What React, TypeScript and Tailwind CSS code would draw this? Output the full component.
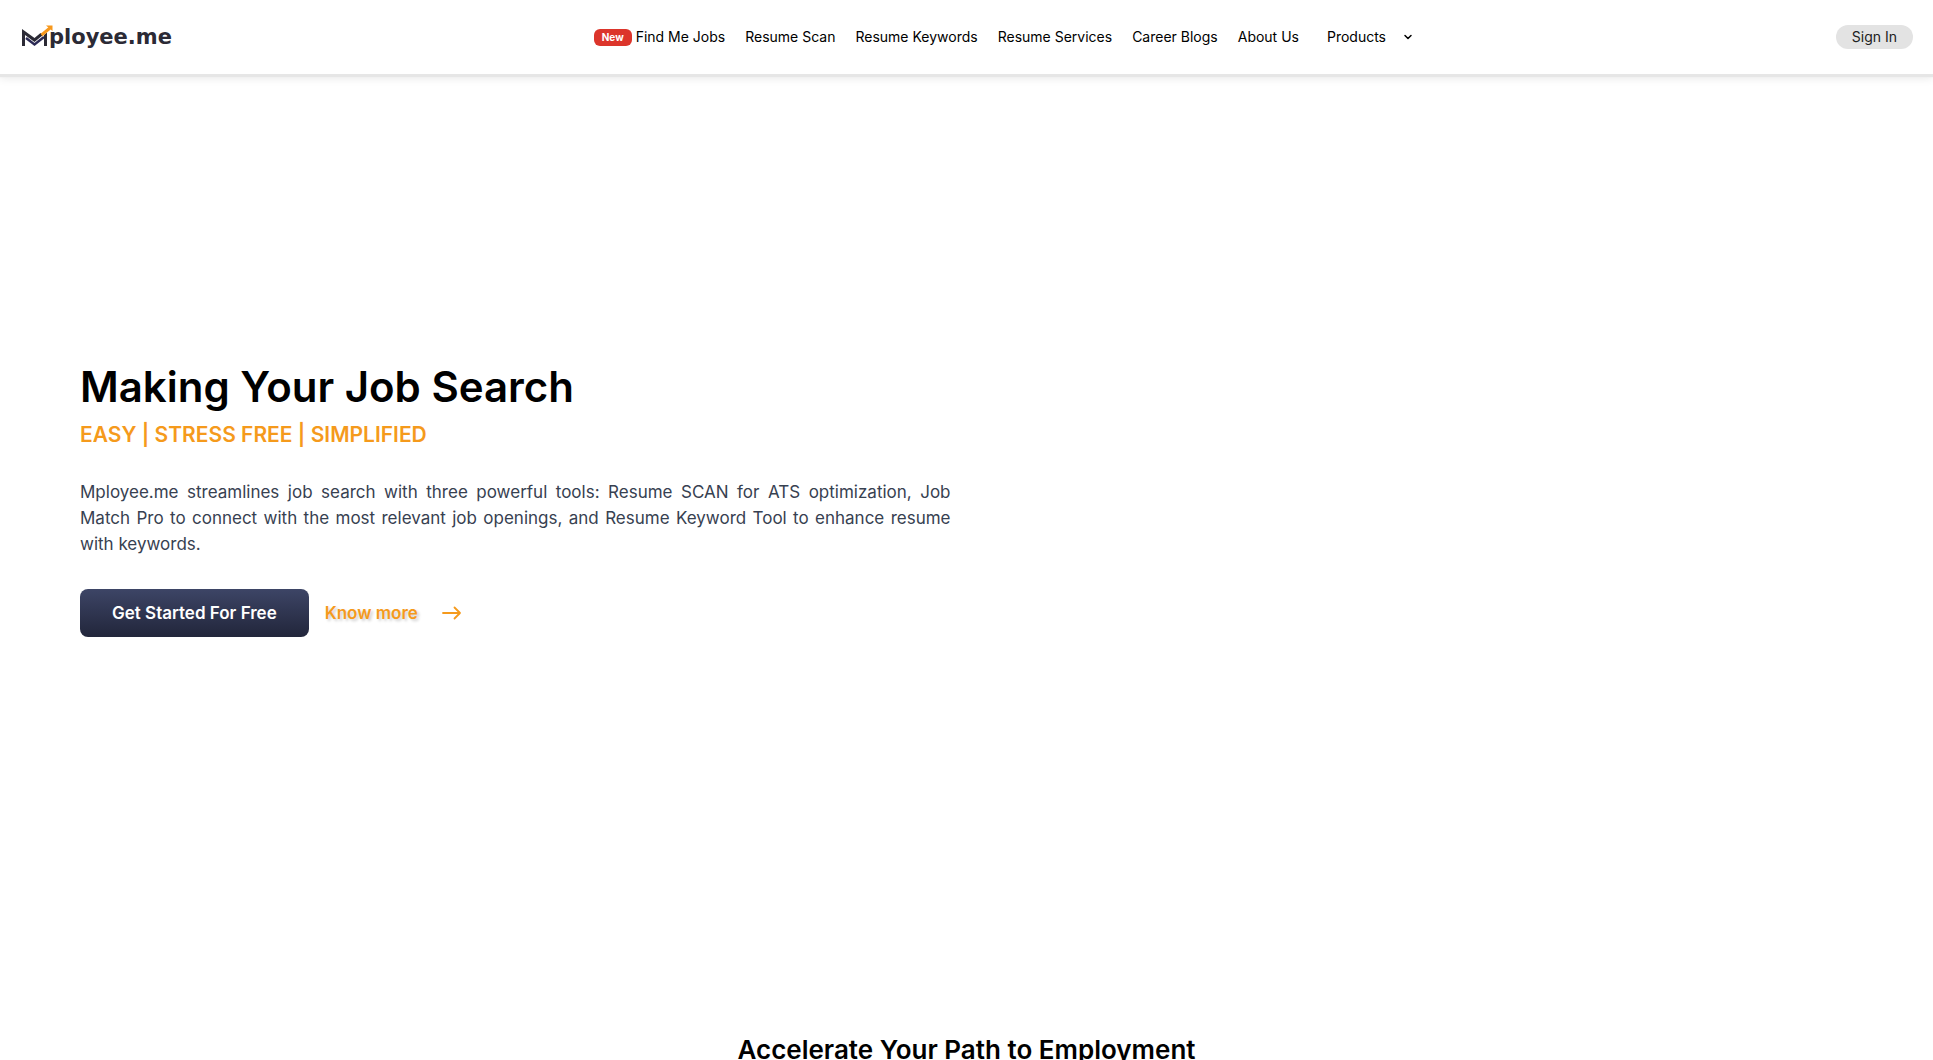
import { ChevronDown } from "lucide-react";

const links = ["Resume Scan", "Resume Keywords", "Resume Services", "Career Blogs", "About Us"];

function Logo() {
  return (
    <a href="#home" aria-label="Mployee.me" className="flex h-7 items-center text-[#2b2a35]">
      <svg width="31" height="24" viewBox="0 0 31 24" fill="none" aria-hidden="true">
        <path d="M0 21V4L12.5 13L18.5 8L21 10L12.5 17L3 10V21Z" fill="#2b2a35" />
        <path d="M4 13L12.5 19.5L22 12" stroke="#2b2a55" strokeWidth="2.4" />
        <path d="M22 10L25 7.5V21H22Z" fill="#2b2a35" />
        <path d="M19.5 10L28 3" stroke="#f7981d" strokeWidth="3" />
        <path d="M24 0.5H30.5V6Z" fill="#f7981d" />
      </svg>
      <span className="-ml-1 font-['DejaVu_Sans',sans-serif] text-[21px] leading-6 font-bold">ployee.me</span>
    </a>
  );
}

function LongArrow() {
  return (
    <svg width="20" height="14" viewBox="0 0 20 14" fill="none" stroke="currentColor" strokeWidth="1.8" strokeLinecap="round" strokeLinejoin="round" aria-hidden="true">
      <path d="M1 7H18M12.5 1.5L18 7L12.5 12.5" />
    </svg>
  );
}

function Header() {
  return (
    <header className="flex h-[74px] items-center justify-between bg-white pr-5 pl-[22px] shadow-[0_3px_1px_#e6e6e6,0_5px_8px_rgba(0,0,0,0.08)]">
      <Logo />
      <nav className="flex items-center gap-5 text-[14px] leading-5 font-normal whitespace-nowrap">
        <a href="#jobs" className="flex items-center gap-1">
          <span className="rounded-md bg-[#dc352b] px-2 text-[10px] leading-[17px] font-bold text-white">New</span>
          Find Me Jobs
        </a>
        {links.map((label) => (
          <a key={label} href="#">
            {label}
          </a>
        ))}
        <button type="button" className="ml-2 flex items-center gap-4">
          Products
          <ChevronDown size={12} strokeWidth={3} />
        </button>
      </nav>
      <button type="button" className="rounded-full bg-[#e3e3e3] px-4 text-[14px] leading-6 font-normal text-[#212121]">
        Sign In
      </button>
    </header>
  );
}

export default function App() {
  return (
    <div className="h-screen overflow-hidden bg-white font-['Inter',sans-serif] text-black">
      <Header />
      <main>
        <section className="px-20 pt-[283px]">
          <h1 className="text-[42px] leading-[60px] font-semibold">Making Your Job Search</h1>
          <p className="text-[21px] leading-9 font-semibold text-[#f59a1c]">EASY | STRESS FREE | SIMPLIFIED</p>
          <p className="mt-[26px] w-[49.1%] text-justify text-[17px] leading-[26px] font-normal text-[#374151]">
            Mployee.me streamlines job search with three powerful tools: Resume SCAN for ATS optimization, Job Match Pro
            to connect with the most relevant job openings, and Resume Keyword Tool to enhance resume with keywords.
          </p>
          <div className="mt-8 flex items-center gap-4 text-[17px] leading-6 font-semibold">
            <button
              type="button"
              className="rounded-lg bg-linear-to-b from-[#3d4566] to-[#22263b] px-8 py-3 text-white"
            >
              Get Started For Free
            </button>
            <a href="#more" className="flex items-center gap-6 text-[#f59a1c]">
              <span className="[text-shadow:2px_2px_3px_rgba(0,0,0,0.2)]">Know more</span>
              <LongArrow />
            </a>
          </div>
        </section>
        <section className="pt-[395px]">
          <h2 className="text-center text-[26px] leading-9 font-semibold">Accelerate Your Path to Employment</h2>
        </section>
      </main>
    </div>
  );
}
